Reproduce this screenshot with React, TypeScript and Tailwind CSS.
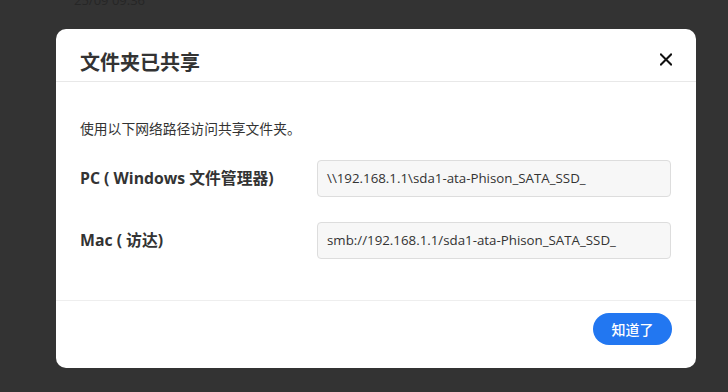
import React from "react";

const font = { fontFamily: '"Open Sans", "Noto Sans CJK SC", sans-serif' };

export default function App() {
  return (
    <div className="w-full h-[392px] bg-[#333333] overflow-hidden flex flex-col" style={font}>
      <div className="h-[29px] pl-[74px] flex flex-col">
        <div className="-mt-[8px] text-[13px] leading-[16px] text-[#262626]">25/09 09:36</div>
      </div>
      <div className="ml-[56px] w-[640px] h-[339px] bg-white rounded-[10px] flex flex-col">
        <div className="h-[53px] border-b border-[#e8e8e8] flex items-start justify-between pl-[24px] pr-[24px]">
          <div className="pt-[20px] text-[20px] leading-[28px] font-bold text-[#333333]">文件夹已共享</div>
          <button className="mt-[24px] w-[12px] h-[12px] flex items-center justify-center">
            <svg width="13" height="13" viewBox="0 0 13 13">
              <path d="M1 1L12 12M12 1L1 12" stroke="#111" strokeWidth="2.2" strokeLinecap="square" />
            </svg>
          </button>
        </div>
        <div className="h-[219px] border-b border-[#eeeeee] px-[24px] pt-[37px] flex flex-col">
          <div className="text-[13.8px] leading-[20px] text-[#333333]">使用以下网络路径访问共享文件夹。</div>
          <div className="mt-[21px] flex items-center">
            <div className="w-[237px] text-[15.8px] font-bold text-[#333333]">PC ( Windows 文件管理器)</div>
            <div className="w-[354px] h-[37px] bg-[#f7f7f7] border border-[#dddddd] rounded-[4px] px-[9px] flex items-center text-[13.3px] text-[#333333]">
              \\192.168.1.1\sda1-ata-Phison_SATA_SSD_
            </div>
          </div>
          <div className="mt-[25px] flex items-center">
            <div className="w-[237px] text-[15.8px] font-bold text-[#333333]">Mac ( 访达)</div>
            <div className="w-[354px] h-[37px] bg-[#f7f7f7] border border-[#dddddd] rounded-[4px] px-[9px] flex items-center text-[13.3px] text-[#333333]">
              smb://192.168.1.1/sda1-ata-Phison_SATA_SSD_
            </div>
          </div>
        </div>
        <div className="flex justify-end px-[24px] pt-[12px]">
          <button className="w-[79px] h-[32px] rounded-full bg-[#2277f1] text-white text-[14px] font-medium flex items-center justify-center">
            知道了
          </button>
        </div>
      </div>
    </div>
  );
}
